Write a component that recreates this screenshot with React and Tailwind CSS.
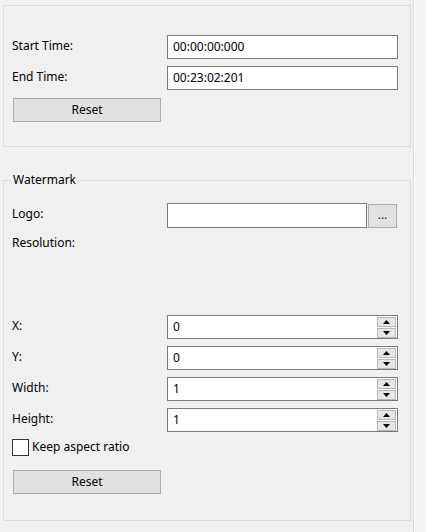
const font = { fontFamily: '"Noto Sans", "Open Sans", sans-serif' }

function Field({ value = '', className = '' }) {
  return (
    <div className={`h-[24px] border border-[#7a7a7a] bg-white flex items-center pl-[5px] text-[12px] text-black ${className}`}>
      {value}
    </div>
  )
}

function Spin({ value }) {
  return (
    <div className="h-[24px] w-[231px] border border-[#7a7a7a] bg-white flex items-center justify-between">
      <span className="pl-[5px] text-[12px] text-black">{value}</span>
      <div className="flex flex-col gap-[1px] pr-[1px]">
        <div className="w-[19px] h-[10px] bg-[#e6e6e6] border border-[#b8b8b8] flex items-center justify-center">
          <svg width="7" height="4" viewBox="0 0 7 4"><polygon points="0,4 7,4 3.5,0" fill="#000" /></svg>
        </div>
        <div className="w-[19px] h-[10px] bg-[#e6e6e6] border border-[#b8b8b8] flex items-center justify-center">
          <svg width="7" height="4" viewBox="0 0 7 4"><polygon points="0,0 7,0 3.5,4" fill="#000" /></svg>
        </div>
      </div>
    </div>
  )
}

function ResetButton() {
  return (
    <button className="w-[148px] h-[24px] bg-[#e1e1e1] border border-[#adadad] text-[12px] text-black">
      Reset
    </button>
  )
}

function Row({ label, children, className = '' }) {
  return (
    <div className={`flex items-center ${className}`}>
      <span className="w-[155px] text-[12px] text-black -mt-[3px]">{label}</span>
      {children}
    </div>
  )
}

export default function App() {
  return (
    <div className="flex w-[426px] h-[532px] bg-[#f0f0f0] overflow-hidden" style={font}>
      <div className="w-[413px] flex flex-col pl-[3px] pt-[5px]">
        {/* time range */}
        <div className="w-[408px] h-[142px] border border-[#dcdcdc] pt-[29px] pl-[8px] flex flex-col">
          <Row label="Start Time:"><Field value="00:00:00:000" className="w-[231px]" /></Row>
          <Row label="End Time:" className="mt-[7px]"><Field value="00:23:02:201" className="w-[231px]" /></Row>
          <div className="mt-[6px] pl-[1px]"><ResetButton /></div>
        </div>

        {/* watermark */}
        <div className="relative mt-[33px] w-[408px] h-[341px] border border-[#dcdcdc] pt-[22px] pl-[8px] flex flex-col">
          <span className="absolute -top-[9px] left-[7px] bg-[#f0f0f0] px-[2px] text-[12px] text-black leading-[16px]">Watermark</span>
          <Row label="Logo:">
            <Field className="w-[200px] h-[25px]" />
            <button className="ml-[1px] w-[29px] h-[24px] bg-[#e1e1e1] border border-[#adadad] text-[12px] text-[#333] leading-none pb-[2px]">...</button>
          </Row>
          <span className="mt-[6px] h-[18px] text-[12px] text-black">Resolution:</span>
          <div className="h-[63px]" />
          <Row label="X:"><Spin value="0" /></Row>
          <Row label="Y:" className="mt-[7px]"><Spin value="0" /></Row>
          <Row label="Width:" className="mt-[7px]"><Spin value="1" /></Row>
          <Row label="Height:" className="mt-[7px]"><Spin value="1" /></Row>
          <label className="mt-[6px] flex items-center gap-[3px] text-[12px] text-black">
            <span className="w-[17px] h-[17px] border border-[#333] bg-white" />
            Keep aspect ratio
          </label>
          <div className="mt-[12px] pl-[1px]"><ResetButton /></div>
        </div>
      </div>
      <div className="w-[1px] bg-[#dadada]" />
      <div className="w-[1px] bg-white" />
      <div className="flex-1 bg-[#f5f5f5]" />
    </div>
  )
}
